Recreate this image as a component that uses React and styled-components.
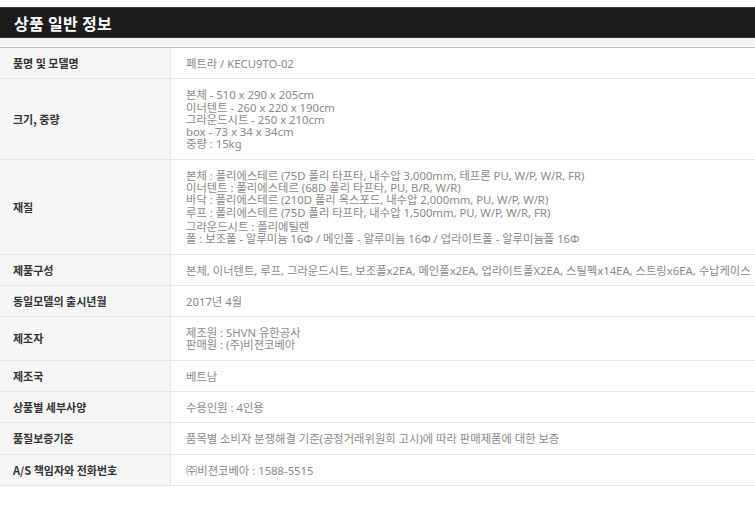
import React from "react";
import styled, { createGlobalStyle } from "styled-components";

const Global = createGlobalStyle`
  html, body { margin: 0; padding: 0; background: #fff; }
  body { font-family: "Noto Sans CJK KR", "Noto Sans", sans-serif; }
`;

const Page = styled.div`
  width: 755px;
  padding-top: 7px;
`;

const TitleBar = styled.div`
  height: 29px;
  background: #1d1d1d;
  border-top: 1px solid #3a3a3a;
  border-bottom: 1px solid #3a3a3a;
  display: flex;
  align-items: center;
  padding-left: 14px;
`;

const Title = styled.h2`
  margin: 0;
  color: #fff;
  font-size: 16px;
  font-weight: 700;
  letter-spacing: 0.3px;
`;

const Gap = styled.div`
  height: 9px;
  background: linear-gradient(#f2f2f2, #fafafa);
`;

const Table = styled.div`
  border-top: 1px solid #c4c4c4;
  display: grid;
  grid-template-columns: 171px 1fr;
`;

const Label = styled.div`
  background: #f7f7f7;
  border-right: 1px solid #e6e6e6;
  border-bottom: 1px solid #e6e6e6;
  padding: 9px 13px;
  display: flex;
  align-items: center;
  font-size: 11px;
  font-weight: 700;
  color: #333;
  line-height: 12.3px;
`;

const Value = styled.div`
  border-bottom: 1px solid #e6e6e6;
  padding: 10px 15px 8px;
  display: flex;
  flex-direction: column;
  justify-content: center;
  font-family: "Noto Sans", "Noto Sans CJK KR", sans-serif;
  font-size: 11.3px;
  color: #8a8a8a;
  line-height: 12.3px;
  white-space: nowrap;
  overflow: hidden;
`;

const Line = styled.div`
  margin-top: ${(p) => (p.$gap ? "2px" : "0")};
`;

const rows = [
  ["품명 및 모델명", ["페트라 / KECU9TO-02"]],
  [
    "크기, 중량",
    [
      "본체 - 510 x 290 x 205cm",
      "이너텐트 - 260 x 220 x 190cm",
      "그라운드시트 - 250 x 210cm",
      "box - 73 x 34 x 34cm",
      "중량 : 15kg",
    ],
  ],
  [
    "재질",
    [
      "본체 : 폴리에스테르 (75D 폴리 타프타, 내수압 3,000mm, 테프론 PU, W/P, W/R, FR)",
      "이너텐트 : 폴리에스테르 (68D 폴리 타프타, PU, B/R, W/R)",
      "바닥 : 폴리에스테르 (210D 폴리 옥스포드, 내수압 2,000mm, PU, W/P, W/R)",
      "루프 : 폴리에스테르 (75D 폴리 타프타, 내수압 1,500mm, PU, W/P, W/R, FR)",
      { gap: true, t: "그라운드시트 : 폴리에틸렌" },
      "폴 : 보조폴 - 알루미늄 16Φ / 메인폴 - 알루미늄 16Φ / 업라이트폴 - 알루미늄폴 16Φ",
    ],
  ],
  [
    "제품구성",
    [
      "본체, 이너텐트, 루프, 그라운드시트, 보조폴x2EA, 메인폴x2EA, 업라이트폴X2EA, 스틸펙x14EA, 스트링x6EA, 수납케이스",
    ],
  ],
  ["동일모델의 출시년월", ["2017년 4월"]],
  ["제조자", ["제조원 : SHVN 유한공사", "판매원 : (주)비젼코베아"]],
  ["제조국", ["베트남"]],
  ["상품별 세부사양", ["수용인원 : 4인용"]],
  ["품질보증기준", ["품목별 소비자 분쟁해결 기준(공정거래위원회 고시)에 따라 판매제품에 대한 보증"]],
  ["A/S 책임자와 전화번호", ["㈜비젼코베아 : 1588-5515"]],
];

export default function App() {
  return (
    <Page>
      <Global />
      <TitleBar>
        <Title>상품 일반 정보</Title>
      </TitleBar>
      <Gap />
      <Table>
        {rows.map(([label, lines]) => (
          <React.Fragment key={label}>
            <Label>{label}</Label>
            <Value>
              {lines.map((l, i) =>
                typeof l === "string" ? (
                  <Line key={i}>{l}</Line>
                ) : (
                  <Line key={i} $gap>
                    {l.t}
                  </Line>
                )
              )}
            </Value>
          </React.Fragment>
        ))}
      </Table>
    </Page>
  );
}
